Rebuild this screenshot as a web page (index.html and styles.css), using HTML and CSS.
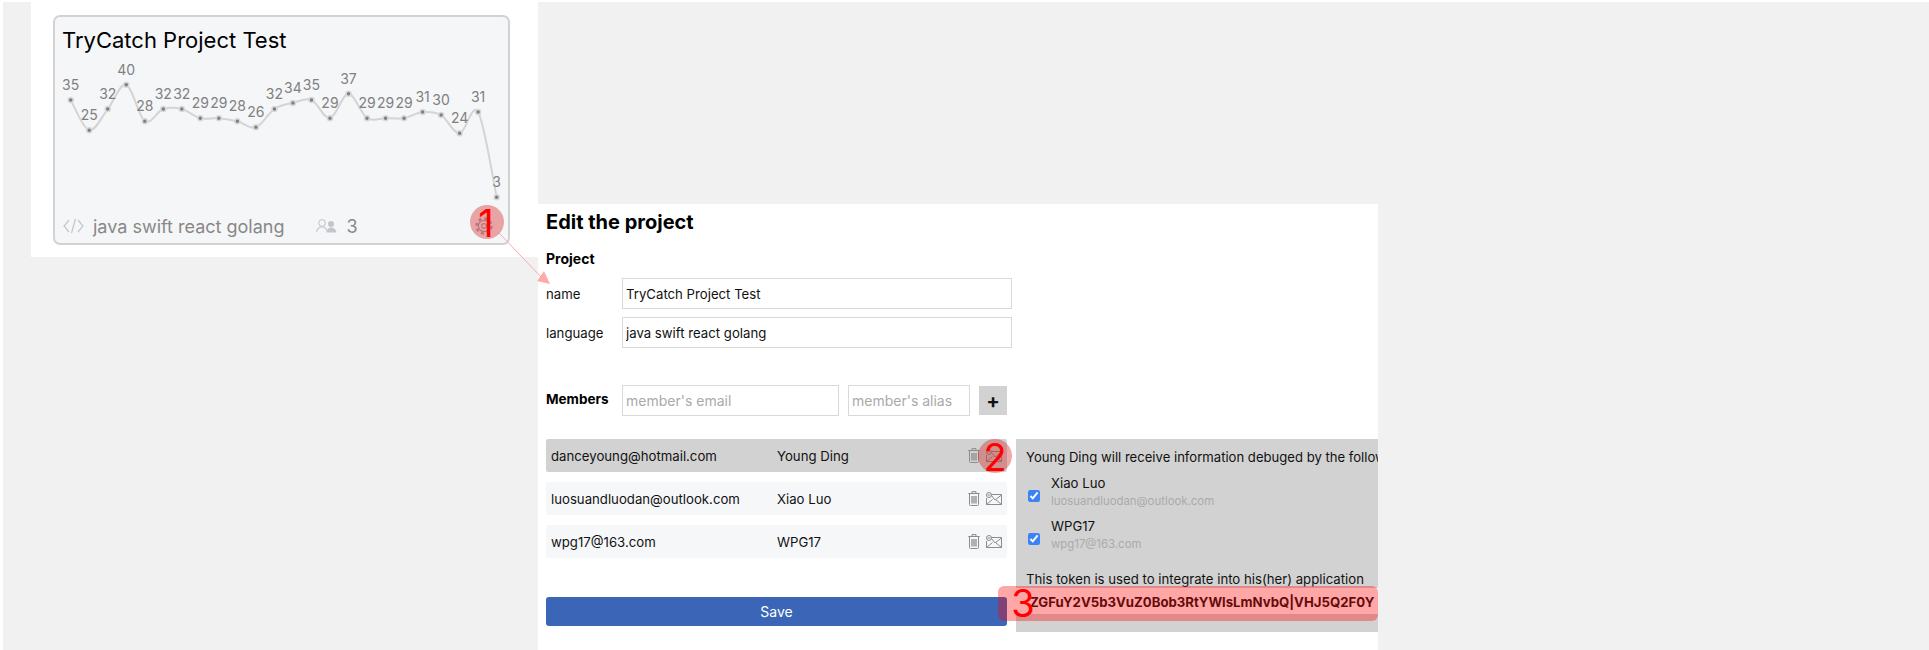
FILE: index.html
```html
<!DOCTYPE html>
<html>

<head>
    <meta charset="utf-8">
    <title>Edit the project</title>
    <link rel="stylesheet" href="styles.css">
</head>

<body>
    <svg class="sprites" width="0" height="0">
        <symbol id="trash" viewBox="0 0 12 15">
            <path d="M4 2V.6h4V2M.3 2.500h11.400M1.500 2.500v11a1 1 0 0 0 1 1h7a1 1 0 0 0 1-1v-11" fill="none" stroke="currentColor" />
            <path d="M4 5v7.500M6 5v7.500M8 5v7.500" fill="none" stroke="currentColor" stroke-width="1.300" />
        </symbol>
        <symbol id="mail" viewBox="0 0 16 13">
            <path d="M5.500 2.500h10v10H.5V6M.5 12.500L6.500 7.500M15.500 12.500L9.500 7.500M5.500 3.500L9 8l6.500-5" fill="none" stroke="currentColor" />
            <circle cx="3" cy="3" r="2.500" fill="none" stroke="currentColor" />
            <path d="M1.600 3h2.800" stroke="currentColor" />
        </symbol>
    </svg>

    <div class="page">
        <div class="card-panel">
            <div class="card">
                <h2>TryCatch Project Test</h2>
                <svg id="chart" class="chart" width="452" height="148" viewBox="0 0 452 148"></svg>
                <div class="card-foot">
                    <svg class="code-icon" width="21" height="16" viewBox="0 0 21 16">
                        <path d="M6 2L1 8l5 6M15 2l5 6-5 6M12.500 1L8.500 15" fill="none" stroke="#c4c6cc" stroke-width="1.200" />
                    </svg>
                    <span class="langs">java swift react golang</span>
                    <svg class="people-icon" width="21" height="14" viewBox="0 0 21 14">
                        <circle cx="6" cy="4" r="3.200" fill="none" stroke="#c4c6cc" stroke-width="1.100" />
                        <path d="M.7 13c.5-3.500 2.500-5 5.300-5s4.800 1.500 5.300 5" fill="none" stroke="#c4c6cc" stroke-width="1.100" />
                        <circle cx="15" cy="5" r="3" fill="#c4c6cc" />
                        <path d="M10.500 13.500c.5-3.500 2-5 4.500-5s5 1.500 5.500 5z" fill="#c4c6cc" />
                    </svg>
                    <span class="count">3</span>
                    <svg class="gear-icon" width="20" height="20" viewBox="0 0 20 20">
                        <circle cx="10" cy="10" r="7.500" fill="none" stroke="#aaa" stroke-width="2.400" stroke-dasharray="3 2.900" />
                        <circle cx="10" cy="10" r="5.600" fill="none" stroke="#aaa" stroke-width="1.200" />
                        <circle cx="10" cy="10" r="2.400" fill="none" stroke="#aaa" stroke-width="1.200" />
                    </svg>
                </div>
            </div>
        </div>

        <div class="editor">
            <h1>Edit the project</h1>
            <h3>Project</h3>
            <div class="field name-field">
                <label>name</label>
                <input class="input input-long" type="text" value="TryCatch Project Test">
            </div>
            <div class="field">
                <label>language</label>
                <input class="input input-long" type="text" value="java swift react golang">
            </div>

            <div class="field members-field">
                <label class="bold">Members</label>
                <input class="input input-email" type="text" placeholder="member's email">
                <input class="input input-alias" type="text" placeholder="member's alias">
                <button class="add-btn">+</button>
            </div>

            <div class="members">
                <div class="member-col">
                    <ul class="member-list">
                        <li class="member active">
                            <span class="email">danceyoung@hotmail.com</span>
                            <span class="alias">Young Ding</span>
                            <svg class="icon-trash"><use href="#trash" /></svg>
                            <svg class="icon-mail"><use href="#mail" /></svg>
                        </li>
                        <li class="member">
                            <span class="email">luosuandluodan@outlook.com</span>
                            <span class="alias">Xiao Luo</span>
                            <svg class="icon-trash"><use href="#trash" /></svg>
                            <svg class="icon-mail"><use href="#mail" /></svg>
                        </li>
                        <li class="member">
                            <span class="email">wpg17@163.com</span>
                            <span class="alias">WPG17</span>
                            <svg class="icon-trash"><use href="#trash" /></svg>
                            <svg class="icon-mail"><use href="#mail" /></svg>
                        </li>
                    </ul>
                    <button class="save-btn">Save</button>
                </div>

                <div class="debug-panel">
                    <p class="debug-title">Young Ding will receive information debuged by the follow</p>
                    <label class="debug-member">
                        <input type="checkbox" checked>
                        <span class="debug-name">Xiao Luo<small>luosuandluodan@outlook.com</small></span>
                    </label>
                    <label class="debug-member">
                        <input type="checkbox" checked>
                        <span class="debug-name">WPG17<small>wpg17@163.com</small></span>
                    </label>
                    <p class="token-title">This token is used to integrate into his(her) application</p>
                    <p class="token">ZGFuY2V5b3VuZ0Bob3RtYWlsLmNvbQ|VHJ5Q2F0Y</p>
                </div>
            </div>
        </div>
    </div>

    <svg class="marks" width="1929" height="650" viewBox="0 0 1929 650">
        <path d="M499 233L543 279" stroke="#ffa9a9" stroke-width="1" />
        <path d="M550 284L537 281 544 271z" fill="#ffa9a9" />
        <circle cx="487" cy="222" r="17" class="mark-dot" />
        <circle cx="995" cy="456" r="17" class="mark-dot" />
        <rect x="998" y="586" width="380" height="35" rx="6" fill="#f00" fill-opacity=".35" />
        <text x="486" y="237" class="mark-digit">1</text>
        <text x="995" y="471" class="mark-digit">2</text>
        <text x="1023" y="617" class="mark-digit">3</text>
    </svg>

    <script src="chart.js"></script>
</body>

</html>
```

FILE: styles.css
```css
* {
    box-sizing: border-box;
}

body {
    margin: 0;
    padding: 2px 0 0 3px;
    background-color: #fff;
    font-family: Inter, "Liberation Sans", sans-serif;
    font-size: 13.2px;
    color: #111;
}

.sprites {
    position: absolute;
}

.page {
    height: 648px;
    overflow: hidden;
    display: grid;
    grid-template-columns: 28px 507px 840px 1fr;
    grid-template-rows: 202px 53px 393px;
    background-color: #f1f1f1;
}

.card-panel {
    grid-column: 2;
    grid-row: 1 / 3;
    background-color: #fff;
    padding: 13px 28px 12px 22px;
}

.card {
    height: 230px;
    background-color: #f5f6f8;
    border: 2px solid #d2d2d2;
    border-radius: 7px;
    padding: 0 8px;
}

.card h2 {
    margin: 8px 0 0 -1px;
    font-size: 22px;
    line-height: 30px;
    font-weight: 400;
    color: #000;
}

.chart {
    display: block;
    margin: 0 -8px;
}

.chart path {
    fill: none;
    stroke: #d4d4d4;
    stroke-width: 2;
}

.chart circle {
    fill: #808080;
    stroke: #d8d8d8;
    stroke-width: 1.500;
}

.chart text {
    fill: #808080;
    font-size: 14px;
    text-anchor: middle;
}

.card-foot {
    display: flex;
    align-items: center;
    height: 30px;
    margin-top: 8px;
    color: #888;
    font-size: 18px;
}

.langs {
    margin-left: 9px;
}

.people-icon {
    margin-left: 32px;
}

.count {
    margin-left: 9px;
}

.gear-icon {
    margin-left: auto;
    margin-right: 6px;
}

.editor {
    grid-column: 3;
    grid-row: 2 / 4;
    background-color: #fff;
    padding: 0 0 0 8px;
    overflow: hidden;
}

.editor h1 {
    margin: 5px 0 0;
    font-size: 20px;
    line-height: 26px;
    font-weight: 700;
    color: #000;
}

.editor h3 {
    margin: 14px 0 0;
    font-size: 14px;
    line-height: 20px;
    font-weight: 700;
    color: #000;
}

.field {
    display: flex;
    align-items: center;
    margin-top: 8px;
}

.name-field {
    margin-top: 9px;
}

.field label {
    width: 76px;
    flex: none;
}

.field label.bold {
    margin-bottom: 4px;
    font-size: 13.5px;
    font-weight: 700;
    color: #000;
}

.members-field {
    margin-top: 37px;
}

.input {
    height: 31px;
    border: 1px solid #d9d9d9;
    padding: 0 3px;
    font: inherit;
    color: #111;
    background-color: #fff;
    outline: none;
}

.input::placeholder {
    color: #aaa;
    font-size: 14px;
}

.input-long {
    width: 390px;
}

.input-email {
    width: 217px;
}

.input-alias {
    width: 122px;
    margin-left: 9px;
}

.add-btn {
    width: 28px;
    height: 29px;
    margin-left: 9px;
    border: 0;
    padding: 0;
    background-color: #d2d2d2;
    font: 700 20px Inter, sans-serif;
    color: #111;
}

.members {
    display: flex;
    margin-top: 23px;
}

.member-col {
    width: 461px;
    flex: none;
}

.member-list {
    list-style-type: none;
    margin: 0;
    padding: 0;
}

.member {
    display: flex;
    align-items: center;
    height: 33px;
    margin-bottom: 10px;
    padding: 0 5px;
    background-color: #f6f7f9;
    border-radius: 2px;
}

.member.active {
    background-color: #d2d2d2;
}

.email {
    width: 226px;
}

.alias {
    flex: 1;
}

.icon-trash {
    width: 12px;
    height: 15px;
    color: #8c8c8c;
}

.icon-mail {
    width: 16px;
    height: 13px;
    margin-left: 6px;
    color: #8c8c8c;
}

.save-btn {
    display: block;
    width: 100%;
    height: 29px;
    margin-top: 39px;
    border: 0;
    border-radius: 3px;
    background-color: #3b66b8;
    color: #fff;
    font: 14px Inter, sans-serif;
}

.debug-panel {
    width: 362px;
    height: 193px;
    flex: none;
    margin-left: 9px;
    padding: 10px 0 0 10px;
    background-color: #d2d2d2;
    overflow: hidden;
    white-space: nowrap;
}

.debug-title {
    margin: 0;
    font-size: 13.1px;
    line-height: 17px;
}

.debug-member {
    display: flex;
    align-items: center;
    height: 35px;
    margin-top: 8px;
}

.debug-member input {
    width: 12px;
    height: 12px;
    margin: 8px 11px 0 2px;
    accent-color: #3b82f6;
}

.debug-name small {
    display: block;
    margin-top: 3px;
    font-size: 11.400px;
    color: #aaa;
}

.token-title {
    margin: 19px 0 0;
    line-height: 17px;
}

.token {
    margin: 0 0 0 -10px;
    padding: 6px 0 3px 14px;
    line-height: 17px;
    font-size: 13.2px;
    font-weight: 700;
    background-color: #fff;
}

.marks {
    position: absolute;
    left: 0;
    top: 0;
    pointer-events: none;
}

.mark-dot {
    fill: #d21e1e;
    fill-opacity: .38;
}

.mark-digit {
    fill: #f00;
    font-family: Inter, sans-serif;
    font-size: 38px;
    text-anchor: middle;
}
```

FILE: chart.js
```js
const values = [35, 25, 32, 40, 28, 32, 32, 29, 29, 28, 26, 32, 34, 35, 29, 37, 29, 29, 29, 31, 30, 24, 31, 3];
const chart = document.querySelector("#chart");
const svgNS = "http://www.w3.org/2000/svg";

// the svg starts at x=55, y=55 of the page
const points = values.map((v, i) => [15.7 + i * 18.52, 29.7 + (40 - v) * 3.04]);

let d = "M" + points[0].join(" ");
for (let i = 0; i < points.length - 1; i++) {
    const p0 = points[Math.max(i - 1, 0)];
    const p1 = points[i];
    const p2 = points[i + 1];
    const p3 = points[Math.min(i + 2, points.length - 1)];
    const c1 = [p1[0] + (p2[0] - p0[0]) / 6, p1[1] + (p2[1] - p0[1]) / 6];
    const c2 = [p2[0] - (p3[0] - p1[0]) / 6, p2[1] - (p3[1] - p1[1]) / 6];
    d += "C" + c1.join(" ") + " " + c2.join(" ") + " " + p2.join(" ");
}

function add(name, attrs, text) {
    const el = document.createElementNS(svgNS, name);
    Object.keys(attrs).forEach(k => el.setAttribute(k, attrs[k]));
    if (text !== undefined) el.textContent = text;
    chart.appendChild(el);
}

add("path", { d: d });
points.forEach((p, i) => {
    add("circle", { cx: p[0], cy: p[1], r: 2.5 });
    add("text", { x: p[0], y: p[1] - 10 }, values[i]);
});
```
